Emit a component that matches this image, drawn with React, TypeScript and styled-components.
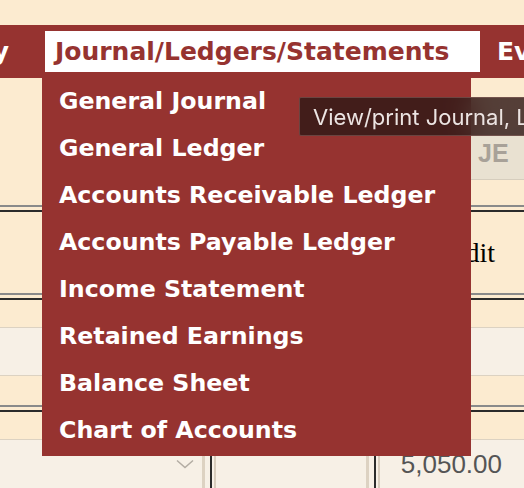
import styled, { createGlobalStyle } from "styled-components";

const menuItems = [
  "General Journal",
  "General Ledger",
  "Accounts Receivable Ledger",
  "Accounts Payable Ledger",
  "Income Statement",
  "Retained Earnings",
  "Balance Sheet",
  "Chart of Accounts",
];

const GlobalStyle = createGlobalStyle`
  html, body {
    margin: 0;
    padding: 0;
    background: #fcebd0;
    overflow: hidden;
  }
  body {
    font-family: "DejaVu Sans", Verdana, sans-serif;
  }
`;

const Page = styled.div`
  position: relative;
  width: 524px;
  height: 488px;
  overflow: hidden;
  display: flex;
  flex-direction: column;
`;

const TopGap = styled.div`
  height: 25px;
  flex: none;
`;

const NavBar = styled.nav`
  flex: none;
  height: 53px;
  background: #963330;
  display: flex;
  align-items: stretch;
  white-space: nowrap;
  position: relative;
  z-index: 2;
`;

const NavEdge = styled.div`
  flex: 0 0 19px;
  min-width: 0;
  display: flex;
  justify-content: flex-end;
  align-items: center;
`;

const NavCell = styled.div<{ $gap: number }>`
  position: relative;
  flex: none;
  display: flex;
  align-items: center;
  margin-left: ${(p) => p.$gap}px;
`;

const NavLabel = styled.span<{ $active?: boolean }>`
  flex: none;
  display: flex;
  align-items: center;
  box-sizing: border-box;
  height: 41px;
  padding: 0 10px;
  width: ${(p) => (p.$active ? "435px" : "auto")};
  background: ${(p) => (p.$active ? "#ffffff" : "transparent")};
  color: ${(p) => (p.$active ? "#963330" : "#ffffff")};
  font-weight: bold;
  font-size: 25px;
`;

const Dropdown = styled.ul`
  position: absolute;
  top: 100%;
  left: -3px;
  width: 429px;
  margin: 0;
  padding: 0 0 2px;
  list-style: none;
  background: #963330;
`;

const MenuItem = styled.li`
  height: 47px;
  line-height: 47px;
  padding-left: 17px;
  color: #ffffff;
  font-weight: bold;
  font-size: 23.7px;
`;

const Tip = styled.div`
  position: absolute;
  left: 299px;
  top: 97px;
  height: 39px;
  box-sizing: border-box;
  padding: 0 13px;
  display: flex;
  align-items: center;
  white-space: nowrap;
  background: rgba(48, 24, 22, 0.82);
  backdrop-filter: blur(14px);
  border: 1px solid rgba(140, 100, 95, 0.55);
  border-radius: 2px;
  color: #ece4e2;
  font-family: Inter, "Liberation Sans", sans-serif;
  font-size: 22px;
  z-index: 3;
`;

const Band = styled.div<{ $h: number; $light?: boolean; $line?: boolean }>`
  flex: none;
  height: ${(p) => p.$h}px;
  background: ${(p) => (p.$light ? "#f7f0e6" : "#fcebd0")};
  border-bottom: ${(p) => (p.$line ? "1px solid #dcd2c2" : "none")};
`;

const ToolRow = styled.div`
  flex: none;
  height: 127px;
  box-sizing: border-box;
  padding-bottom: 25px;
  display: flex;
  justify-content: flex-end;
  align-items: flex-end;
`;

const JeButton = styled.div`
  width: 64px;
  height: 53px;
  box-sizing: border-box;
  padding-left: 18px;
  display: flex;
  align-items: center;
  background: #e9e1d1;
  border-bottom: 1px solid #d6cdbd;
  color: #a8a198;
  font-family: "Liberation Sans", Arial, sans-serif;
  font-weight: bold;
  font-size: 25px;
`;

const Rule = styled.div`
  flex: none;
  height: 3px;
  border-top: 2px solid #8a8a8a;
  border-bottom: 2px solid #2b2b2b;
`;

const HeaderRow = styled.div`
  flex: none;
  height: 81px;
  display: flex;
  align-items: center;
  justify-content: flex-end;
  padding-right: 29px;
  font-family: "Liberation Serif", "Times New Roman", serif;
  font-size: 28px;
  color: #000;
`;

const EntryRow = styled.div`
  flex: 1;
  display: flex;
  background: #f7f0e6;
`;

const SelectBox = styled.div`
  flex: 0 0 205px;
  box-sizing: border-box;
  border-right: 3px solid #ddd2c2;
  display: flex;
  justify-content: flex-end;
  align-items: center;
  padding-right: 8px;
`;

const Cell = styled.div<{ $w?: number }>`
  flex: ${(p) => (p.$w ? `0 0 ${p.$w}px` : "1")};
  margin-left: 5px;
  border-left: 2px solid #2b2b2b;
  padding-left: 2px;
  display: flex;
`;

const Field = styled.div<{ $edge?: boolean }>`
  flex: 1;
  border-left: 2px solid #d8cdbd;
  border-right: ${(p) => (p.$edge ? "3px solid #ddd2c2" : "none")};
  display: flex;
  justify-content: flex-end;
  align-items: center;
  padding-right: 22px;
  font-family: "Liberation Sans", Arial, sans-serif;
  font-size: 26px;
  color: #555555;
`;

const Chevron = () => (
  <svg width="18" height="10" viewBox="0 0 18 10" fill="none">
    <path d="M1 1.5 L9 8.5 L17 1.5" stroke="#b3aca3" strokeWidth="1.5" />
  </svg>
);

export default function App() {
  return (
    <>
      <GlobalStyle />
      <Page>
        <TopGap />
        <NavBar>
          <NavEdge>
            <NavLabel>Inventory</NavLabel>
          </NavEdge>
          <NavCell $gap={26}>
            <NavLabel $active>Journal/Ledgers/Statements</NavLabel>
            <Dropdown>
              {menuItems.map((item) => (
                <MenuItem key={item}>{item}</MenuItem>
              ))}
            </Dropdown>
          </NavCell>
          <NavCell $gap={7}>
            <NavLabel>Events</NavLabel>
          </NavCell>
        </NavBar>
        <ToolRow>
          <JeButton>JE</JeButton>
        </ToolRow>
        <Rule />
        <HeaderRow>Credit</HeaderRow>
        <Rule />
        <Band $h={27} $line />
        <Band $h={47} $light $line />
        <Band $h={29} />
        <Rule />
        <Band $h={27} $line />
        <EntryRow>
          <SelectBox>
            <Chevron />
          </SelectBox>
          <Cell $w={155}>
            <Field $edge />
          </Cell>
          <Cell>
            <Field>5,050.00</Field>
          </Cell>
        </EntryRow>
        <Tip>View/print Journal, Ledgers and Statements</Tip>
      </Page>
    </>
  );
}
